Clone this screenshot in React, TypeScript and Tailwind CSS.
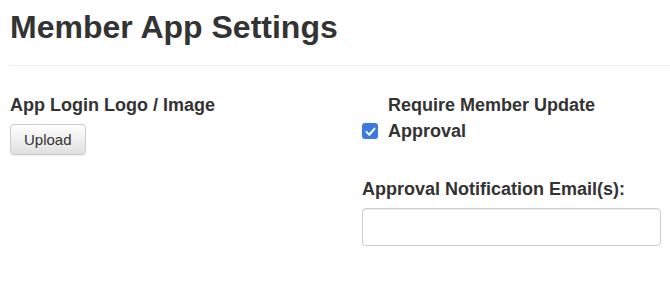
export default function App() {
  return (
    <div className="min-h-[281px] w-[670px] bg-white text-[#333] font-['Liberation_Sans',Arial,sans-serif]">
      <div className="pl-[10px] pt-[10px]">
        <h1 className="text-[32px] leading-[34px] font-bold">Member App Settings</h1>
        <hr className="mt-[21px] border-0 border-t border-[#eee]" />
      </div>

      <div className="flex pl-[10px] pr-[9px] pt-[26px]">
        {/* left column */}
        <div className="w-[352px]">
          <div className="text-[18px] leading-[26px] font-bold">App Login Logo / Image</div>
          <button
            type="button"
            className="mt-[6px] h-[31px] px-[13px] rounded-[4px] border border-[#ccc] bg-linear-to-b from-white to-[#e0e0e0] text-[15px] leading-[29px] text-[#333] shadow-[inset_0_1px_0_rgba(255,255,255,0.15),0_1px_1px_rgba(0,0,0,0.075)]"
          >
            Upload
          </button>
        </div>

        {/* right column */}
        <div className="flex-1">
          <div className="pl-[26px] text-[18px] leading-[26px] font-bold">Require Member Update</div>
          <label className="flex items-center gap-[10px] text-[18px] leading-[26px] font-bold">
            <span className="flex h-[16px] w-[16px] items-center justify-center rounded-[3px] bg-[#3b7ae0]">
              <svg viewBox="0 0 16 16" className="h-[13px] w-[13px]" fill="none">
                <path d="M3 8.5 L6.5 12 L13 4.5" stroke="white" strokeWidth="2.4" strokeLinecap="round" strokeLinejoin="round" />
              </svg>
            </span>
            Approval
          </label>

          <div className="mt-[32px] text-[18px] leading-[26px] font-bold">Approval Notification Email(s):</div>
          <input
            type="text"
            className="mt-[6px] block h-[38px] w-full rounded-[4px] border border-[#ccc] bg-white px-3 outline-none shadow-[inset_0_1px_1px_rgba(0,0,0,0.075)]"
          />
        </div>
      </div>
    </div>
  )
}
